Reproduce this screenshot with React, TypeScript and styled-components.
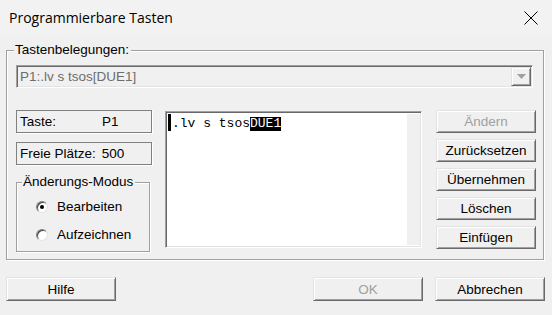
import React from "react";
import styled, { createGlobalStyle } from "styled-components";

const Global = createGlobalStyle`
  html, body { margin: 0; padding: 0; background: #f0f0f0; }
  * { box-sizing: border-box; }
`;

const Window = styled.div`
  width: 552px;
  height: 315px;
  background: #f0f0f0;
  font-family: "Liberation Sans", Arial, sans-serif;
  font-size: 13px;
  color: #000;
  overflow: hidden;
`;

const TitleBar = styled.div`
  height: 36px;
  background: #f2f2f2;
  display: flex;
  align-items: center;
  justify-content: space-between;
  padding: 0 14px 0 9px;
`;

const Title = styled.div`
  font-family: "Open Sans", "Noto Sans", sans-serif;
  font-size: 14px;
  color: #000;
  padding-bottom: 1px;
`;

const Body = styled.div`
  padding: 14px 0 0 6px;
`;

const Group = styled.div<{ $w: number; $h: number }>`
  position: relative;
  width: ${(p) => p.$w}px;
  height: ${(p) => p.$h}px;
  border: 1px solid #a0a0a0;
  box-shadow: 1px 1px 0 #fff, inset 1px 1px 0 #fff;
`;

const GroupLabel = styled.span<{ $left: number }>`
  position: absolute;
  top: -9px;
  left: ${(p) => p.$left}px;
  background: #f0f0f0;
  padding: 0 2px 0 1px;
  line-height: 16px;
  font-size: 13.5px;
`;

const MainGroup = styled(Group)`
  padding: 14px 0 0 9px;
`;

const Combo = styled.div`
  width: 517px;
  height: 23px;
  border: 1px solid;
  border-color: #a0a0a0 #fff #fff #a0a0a0;
  box-shadow: inset 1px 1px 0 #696969, inset -1px -1px 0 #e3e3e3;
  display: flex;
  align-items: center;
  justify-content: space-between;
  padding: 0 1px 0 3px;
  color: #6d6d6d;
  font-size: 13.5px;
`;

const DropButton = styled.div`
  width: 20px;
  height: 19px;
  border: 1px solid;
  border-color: #e3e3e3 #696969 #696969 #e3e3e3;
  box-shadow: inset 1px 1px 0 #fff, inset -1px -1px 0 #a0a0a0;
  display: flex;
  align-items: center;
  justify-content: center;
`;

const Lower = styled.div`
  display: flex;
  margin-top: 22px;
`;

const LeftCol = styled.div`
  width: 136px;
  display: flex;
  flex-direction: column;
  gap: 9px;
`;

const InfoBox = styled.div`
  height: 23px;
  border: 1px solid #808080;
  box-shadow: 1px 1px 0 #fff;
  display: flex;
  align-items: center;
  padding-left: 3px;
  font-size: 13.5px;
`;

const InfoValue = styled.span<{ $left: number }>`
  margin-left: ${(p) => p.$left}px;
`;

const ModeGroup = styled(Group)`
  margin-top: 8px;
  padding: 17px 0 0 19px;
  display: flex;
  flex-direction: column;
  gap: 15px;
`;

const RadioRow = styled.label`
  display: flex;
  align-items: center;
  gap: 9px;
  height: 13px;
  font-size: 13.5px;
`;

const RadioCircle = styled.span<{ $on?: boolean }>`
  width: 12px;
  height: 12px;
  border-radius: 50%;
  background: #fff;
  border: 1px solid;
  border-color: #808080 #e3e3e3 #e3e3e3 #808080;
  box-shadow: inset 1px 1px 0 #404040;
  display: flex;
  align-items: center;
  justify-content: center;
  &::after {
    content: "";
    display: ${(p) => (p.$on ? "block" : "none")};
    width: 4px;
    height: 4px;
    border-radius: 50%;
    background: #000;
  }
`;

const Editor = styled.div`
  margin-left: 13px;
  margin-top: 1px;
  width: 257px;
  height: 137px;
  border: 1px solid;
  border-color: #a0a0a0 #fff #fff #a0a0a0;
  box-shadow: inset 1px 1px 0 #696969, inset -1px -1px 0 #e3e3e3;
  background: #fff;
  display: flex;
  padding: 2px 1px 2px 2px;
`;

const EditorText = styled.div`
  flex: 1;
  font-family: "Liberation Mono", "DejaVu Sans Mono", monospace;
  font-size: 13px;
  line-height: 14px;
  padding-top: 3px;
  display: flex;
  align-items: flex-start;
`;

const Caret = styled.span`
  width: 3px;
  height: 17px;
  margin-top: -3px;
  background: #000;
  margin-right: 1px;
`;

const Selected = styled.span`
  background: #000;
  color: #fff;
`;

const ScrollStrip = styled.div`
  width: 13px;
  background: #f0f0f0;
`;

const RightCol = styled.div`
  margin-left: 14px;
  width: 100px;
  display: flex;
  flex-direction: column;
  gap: 6px;
`;

const Button = styled.button<{ $disabled?: boolean; $w?: number; $h?: number }>`
  width: ${(p) => p.$w ?? 100}px;
  height: ${(p) => p.$h ?? 23}px;
  margin: 0;
  padding: 0;
  background: #f0f0f0;
  border: 1px solid;
  border-color: #e3e3e3 #696969 #696969 #e3e3e3;
  box-shadow: inset 1px 1px 0 #fff, inset -1px -1px 0 #a0a0a0;
  font-family: "Liberation Sans", Arial, sans-serif;
  font-size: 13.5px;
  font-weight: 400;
  color: ${(p) => (p.$disabled ? "#a0a0a0" : "#000")};
  display: flex;
  align-items: center;
  justify-content: center;
`;

const Footer = styled.div`
  display: flex;
  margin-top: 17px;
  width: 539px;
`;

const Spacer = styled.div`
  flex: 1;
`;

const FooterGap = styled.div`
  width: 12px;
`;

export default function App() {
  return (
    <Window>
      <Global />
      <TitleBar>
        <Title>Programmierbare Tasten</Title>
        <svg width="14" height="14" viewBox="0 0 14 14">
          <path d="M0.5 0.5 L13.5 13.5 M13.5 0.5 L0.5 13.5" stroke="#000" strokeWidth="1" fill="none" />
        </svg>
      </TitleBar>
      <Body>
        <MainGroup $w={538} $h={210}>
          <GroupLabel $left={7}>Tastenbelegungen:</GroupLabel>
          <Combo>
            <span>P1:.lv s tsos[DUE1]</span>
            <DropButton>
              <svg width="9" height="5" viewBox="0 0 9 5">
                <path d="M0 0 H9 L4.5 5 Z" fill="#a0a0a0" />
              </svg>
            </DropButton>
          </Combo>
          <Lower>
            <LeftCol>
              <InfoBox>
                Taste:<InfoValue $left={46}>P1</InfoValue>
              </InfoBox>
              <InfoBox>
                Freie Plätze:<InfoValue $left={6}>500</InfoValue>
              </InfoBox>
              <ModeGroup $w={134} $h={70}>
                <GroupLabel $left={5}>Änderungs-Modus</GroupLabel>
                <RadioRow>
                  <RadioCircle $on />
                  Bearbeiten
                </RadioRow>
                <RadioRow>
                  <RadioCircle />
                  Aufzeichnen
                </RadioRow>
              </ModeGroup>
            </LeftCol>
            <Editor>
              <EditorText>
                <Caret />
                <span>.lv s tsos</span>
                <Selected>DUE1</Selected>
              </EditorText>
              <ScrollStrip />
            </Editor>
            <RightCol>
              <Button $disabled>Ändern</Button>
              <Button>Zurücksetzen</Button>
              <Button>Übernehmen</Button>
              <Button>Löschen</Button>
              <Button>Einfügen</Button>
            </RightCol>
          </Lower>
        </MainGroup>
        <Footer>
          <Button $w={110} $h={24}>Hilfe</Button>
          <Spacer />
          <Button $w={110} $h={24} $disabled>OK</Button>
          <FooterGap />
          <Button $w={110} $h={24}>Abbrechen</Button>
        </Footer>
      </Body>
    </Window>
  );
}
